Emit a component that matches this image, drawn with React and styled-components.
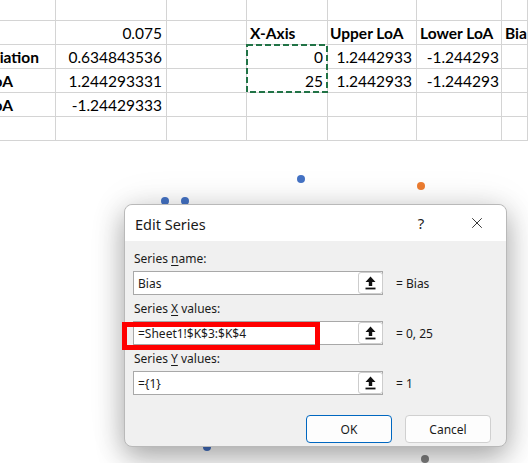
import React from 'react';
import styled, { createGlobalStyle } from 'styled-components';
import { X } from 'lucide-react';

const Global = createGlobalStyle`
	html, body {
		margin: 0;
		padding: 0;
		background: #ffffff;
		overflow: hidden;
	}
	#root {
		width: 528px;
		height: 463px;
	}
`;

const Page = styled.div`
	display: flex;
	flex-direction: column;
	width: 528px;
	height: 463px;
	overflow: hidden;
	background: #fff;
`;

const Sheet = styled.div`
	position: relative;
	display: grid;
	grid-template-columns: 56px 111px 80px 81px 89px 85px 1fr;
	grid-template-rows: 21px repeat(5, 24px);
	font-family: Lato, 'Noto Sans', sans-serif;
	font-size: 15.5px;
	color: #000;
`;

const Cell = styled.div`
	box-sizing: border-box;
	display: flex;
	align-items: center;
	justify-content: ${(p) => (p.$right ? 'flex-end' : 'flex-start')};
	padding-left: ${(p) => (p.$right ? 0 : p.$pad !== undefined ? p.$pad : 3)}px;
	padding-right: ${(p) => (p.$right ? (p.$pad !== undefined ? p.$pad : 3) : 0)}px;
	border-right: 1px solid #d4d4d4;
	border-bottom: 1px solid #d4d4d4;
	font-weight: ${(p) => (p.$bold ? 700 : 400)};
	white-space: nowrap;
	overflow: hidden;
`;

const Marquee = styled.svg`
	position: absolute;
	left: 246px;
	top: 44px;
	width: 82px;
	height: 49px;
	overflow: visible;
`;

const ChartArea = styled.div`
	position: relative;
	flex: 1;
`;

const Dots = styled.svg`
	position: absolute;
	inset: 0;
	width: 100%;
	height: 100%;
`;

const Dialog = styled.div`
	position: absolute;
	left: 124px;
	top: 63px;
	box-sizing: border-box;
	width: 383px;
	height: 243px;
	display: flex;
	flex-direction: column;
	background: #f0f0f0;
	border: 1px solid #b9b9b9;
	border-radius: 8px;
	box-shadow: 0 10px 28px rgba(0, 0, 0, 0.32), 0 0 40px rgba(0, 0, 0, 0.08);
	font-family: 'Noto Sans', 'Open Sans', sans-serif;
	color: #1a1a1a;
`;

const TitleBar = styled.div`
	display: flex;
	align-items: center;
	height: 36px;
	padding: 0 0 0 10px;
	background: #fff;
	border-radius: 8px 8px 0 0;
`;

const Title = styled.div`
	flex: 1;
	font-size: 14.5px;
	padding-top: 1px;
`;

const TitleButton = styled.div`
	display: flex;
	align-items: center;
	justify-content: center;
	width: 46px;
	height: 100%;
	font-size: 15px;
	color: #222;
	margin-right: ${(p) => p.$mr || 0}px;
`;

const Body = styled.div`
	display: flex;
	flex-direction: column;
	gap: 6px;
	padding: 10px 8px 0 8px;
`;

const Field = styled.div`
	display: flex;
	flex-direction: column;
	gap: 4px;
`;

const Label = styled.div`
	font-size: 12px;
	line-height: 16px;
	padding-left: 1px;

	u {
		text-underline-offset: 2px;
	}
`;

const InputRow = styled.div`
	display: flex;
	align-items: center;
	gap: 13px;
`;

const InputBox = styled.div`
	box-sizing: border-box;
	display: flex;
	align-items: stretch;
	width: 250px;
	height: 24px;
	background: #fff;
	border: 1px solid #a8a8a8;
`;

const InputText = styled.div`
	flex: 1;
	display: flex;
	align-items: center;
	padding-left: 4px;
	font-size: 12px;
`;

const PickButton = styled.div`
	box-sizing: border-box;
	display: flex;
	align-items: center;
	justify-content: center;
	width: 25px;
	margin: 0 -1px 0 0;
	background: #fff;
	border: 1px solid #cdcdcd;
	border-radius: 3px;
`;

const Result = styled.div`
	font-size: 12px;
`;

const Buttons = styled.div`
	display: flex;
	justify-content: flex-end;
	gap: 13px;
	margin-top: 14px;
	padding-right: 7px;
`;

const Button = styled.div`
	box-sizing: border-box;
	display: flex;
	align-items: center;
	justify-content: center;
	width: 86px;
	height: 28px;
	font-size: 12px;
	background: #fdfdfd;
	border: 1px solid ${(p) => (p.$primary ? '#0067c0' : '#d0d0d0')};
	border-radius: 4px;
`;

const Highlight = styled.div`
	position: absolute;
	left: -3px;
	top: 117px;
	box-sizing: border-box;
	width: 198px;
	height: 28px;
	border: 5px solid #ff0000;
`;

const rows = [
	[{}, {}, {}, {}, {}, {}, {}],
	[
		{},
		{ t: '0.075', right: true, pad: 4 },
		{},
		{ t: 'X-Axis', bold: true },
		{ t: 'Upper LoA', bold: true, pad: 2 },
		{ t: 'Lower LoA', bold: true },
		{ t: 'Bias', bold: true },
	],
	[
		{ t: 'Standard Deviation', bold: true, right: true, pad: 16 },
		{ t: '0.634843536', right: true, pad: 4 },
		{},
		{ t: '0', right: true, pad: 4 },
		{ t: '1.2442933', right: true, pad: 4 },
		{ t: '-1.244293', right: true, pad: 2 },
		{},
	],
	[
		{ t: 'Upper LoA', bold: true, right: true, pad: 42 },
		{ t: '1.244293331', right: true, pad: 4 },
		{},
		{ t: '25', right: true, pad: 4 },
		{ t: '1.2442933', right: true, pad: 4 },
		{ t: '-1.244293', right: true, pad: 2 },
		{},
	],
	[
		{ t: 'Lower LoA', bold: true, right: true, pad: 42 },
		{ t: '-1.24429333', right: true, pad: 4 },
		{},
		{},
		{},
		{},
		{},
	],
	[{}, {}, {}, {}, {}, {}, {}],
];

const dots = [
	{ x: 165, y: 201, c: '#4472c4' },
	{ x: 185, y: 201, c: '#4472c4' },
	{ x: 301, y: 179, c: '#4472c4' },
	{ x: 421, y: 186, c: '#ed7d31' },
	{ x: 207, y: 447, c: '#4472c4' },
	{ x: 425, y: 459, c: '#7f7f7f' },
];

function PickIcon() {
	return (
		<svg width="11" height="14" viewBox="0 0 11 14">
			<path d="M5.5 0.5 L10.5 6 H7.2 V10 H3.8 V6 H0.5 Z" fill="#111" />
			<rect x="0.5" y="11.6" width="10" height="1.8" fill="#111" />
		</svg>
	);
}

function SeriesField({ label, value, result }) {
	return (
		<Field>
			<Label>{label}</Label>
			<InputRow>
				<InputBox>
					<InputText>{value}</InputText>
					<PickButton>
						<PickIcon />
					</PickButton>
				</InputBox>
				<Result>{result}</Result>
			</InputRow>
		</Field>
	);
}

export default function App() {
	return (
		<Page>
			<Global />
			<Sheet>
				{rows.map((row, r) =>
					row.map((c, i) => (
						<Cell key={`${r}-${i}`} $right={c.right} $bold={c.bold} $pad={c.pad}>
							{c.t}
						</Cell>
					))
				)}
				<Marquee viewBox="0 0 82 49">
					<rect x="1" y="1" width="80" height="47" fill="none" stroke="#217346" strokeWidth="2" strokeDasharray="6 3" />
				</Marquee>
			</Sheet>
			<ChartArea>
				<Dots>
					{dots.map((d, i) => (
						<circle key={i} cx={d.x} cy={d.y - 141} r="4" fill={d.c} />
					))}
				</Dots>
				<Dialog>
					<TitleBar>
						<Title>Edit Series</Title>
						<TitleButton $mr={10}>?</TitleButton>
						<TitleButton $mr={6}>
							<X size={18} strokeWidth={1.2} color="#222" />
						</TitleButton>
					</TitleBar>
					<Body>
						<SeriesField
							label={<>Series <u>n</u>ame:</>}
							value="Bias"
							result="= Bias"
						/>
						<SeriesField
							label={<>Series <u>X</u> values:</>}
							value="=Sheet1!$K$3:$K$4"
							result="= 0, 25"
						/>
						<SeriesField
							label={<>Series <u>Y</u> values:</>}
							value="={1}"
							result="= 1"
						/>
						<Buttons>
							<Button $primary>OK</Button>
							<Button>Cancel</Button>
						</Buttons>
					</Body>
					<Highlight />
				</Dialog>
			</ChartArea>
		</Page>
	);
}
